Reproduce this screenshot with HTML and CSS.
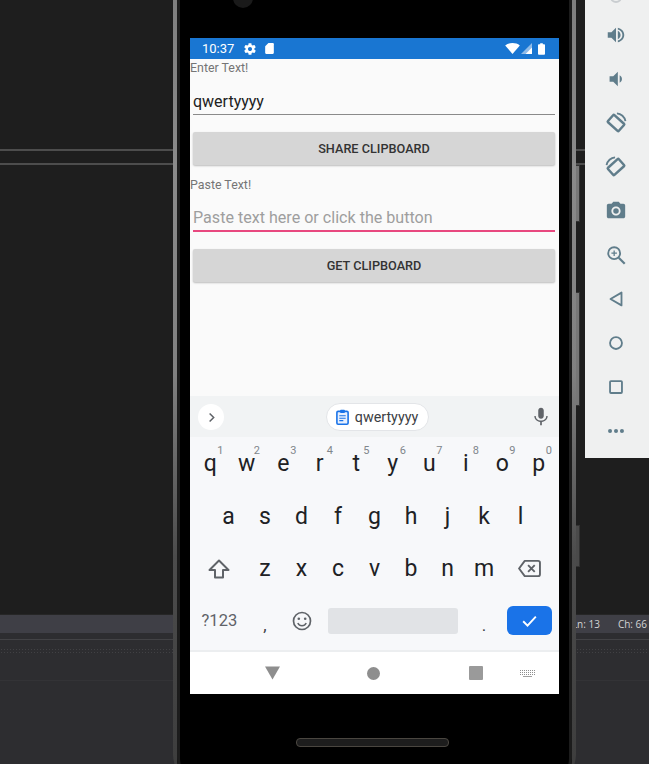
FILE: index.html
```html
<!DOCTYPE html>
<html lang="en">
<head>
  <meta charset="UTF-8" />
  <title>Clipboard sample in emulator</title>
  <link rel="stylesheet" href="styles.css">
</head>
<body>
  <!-- IDE behind the emulator -->
  <div class="ide">
    <div class="pane pane-a"></div>
    <div class="pane pane-b"></div>
    <div class="pane pane-c"></div>
    <div class="ide-status">
      <span>Ln: 13</span>
      <span>Ch: 66</span>
    </div>
    <div class="ide-rule"></div>
    <div class="ide-dots"></div>
    <div class="ide-output"></div>
    <div class="ide-output-rest"></div>
  </div>

  <!-- Side buttons of the device -->
  <div class="side-btn side-btn-a"></div>
  <div class="side-btn side-btn-b"></div>
  <div class="side-btn side-btn-c"></div>

  <div class="phone">
    <div class="phone-body">
      <div class="camera"></div>
      <div class="screen">
        <div class="statusbar">
          <span class="clock">10:37</span>
          <svg class="status-icon gear" viewBox="0 0 24 24"><path d="M19.4 13c.04-.32.07-.66.07-1s-.03-.68-.07-1l2.1-1.65c.2-.15.25-.42.12-.64l-2-3.46c-.12-.22-.39-.3-.61-.22l-2.49 1c-.52-.4-1.08-.73-1.69-.98l-.38-2.65C14.46 2.18 14.25 2 14 2h-4c-.25 0-.46.18-.49.42l-.38 2.65c-.61.25-1.17.59-1.69.98l-2.49-1c-.23-.09-.49 0-.61.22l-2 3.46c-.13.22-.07.49.12.64L4.57 11c-.04.32-.07.66-.07 1s.03.68.07 1l-2.11 1.65c-.19.15-.24.42-.12.64l2 3.46c.12.22.39.3.61.22l2.49-1c.52.4 1.08.73 1.69.98l.38 2.65c.03.24.24.42.49.42h4c.25 0 .46-.18.49-.42l.38-2.65c.61-.25 1.17-.59 1.69-.98l2.49 1c.23.09.49 0 .61-.22l2-3.46c.12-.22.07-.49-.12-.64L19.4 13zM12 15.5c-1.93 0-3.5-1.57-3.5-3.5s1.57-3.5 3.5-3.5 3.5 1.57 3.5 3.5-1.57 3.5-3.5 3.5z"/></svg>
          <svg class="status-icon sd" viewBox="0 0 24 24"><path d="M18 2h-8L4 8v12c0 1.1.9 2 2 2h12c1.1 0 2-.9 2-2V4c0-1.1-.9-2-2-2z"/></svg>
          <span class="status-gap"></span>
          <svg class="wifi" viewBox="0 0 16 12"><path d="M0 2.6C2.2.9 5 0 8 0s5.800.9 8 2.600L8 12z"/></svg>
          <svg class="signal" viewBox="0 0 12 12"><path d="M12 0v12H0z" fill="#8fbbe8"/><path d="M12 5v7H5z" fill="#ffffff"/></svg>
          <svg class="battery" viewBox="0 0 8 13"><path d="M2.500 0h3v1H7a1 1 0 0 1 1 1v10a1 1 0 0 1-1 1H1a1 1 0 0 1-1-1V2a1 1 0 0 1 1-1h1.500z"/></svg>
        </div>

        <div class="app">
          <div class="field-label">Enter Text!</div>
          <div class="entry">qwertyyyy</div>
          <div class="app-btn">SHARE CLIPBOARD</div>
          <div class="field-label next">Paste Text!</div>
          <div class="entry entry-focus">Paste text here or click the button</div>
          <div class="app-btn">GET CLIPBOARD</div>
        </div>

        <div class="keyboard">
          <div class="suggest">
            <div class="chevron-btn">
              <svg viewBox="0 0 24 24"><path d="M9 5.500l6.500 6.500L9 18.500" fill="none" stroke="#5f6368" stroke-width="2.400"/></svg>
            </div>
            <div class="clip-chip">
              <svg viewBox="0 0 16 20"><rect x="1" y="3" width="14" height="16" rx="1.500" fill="#e8f0fe" stroke="#1a73e8" stroke-width="2"/><rect x="5" y="1" width="6" height="4" rx="1" fill="#1a73e8"/><path d="M4 8.500h8M4 11.500h8M4 14.500h5" stroke="#1a73e8" stroke-width="1.400"/></svg>
              <span>qwertyyyy</span>
            </div>
            <svg class="mic" viewBox="0 0 24 24"><path d="M12 14c1.900 0 3.300-1.500 3.300-3.300V4.300C15.300 2.500 13.900 1 12 1S8.700 2.500 8.700 4.300v6.400c0 1.800 1.400 3.300 3.300 3.300zm6.300-3.300c0 3.400-2.800 5.500-6.300 5.500s-6.300-2.100-6.300-5.500H4c0 3.900 3.100 6.700 7 7.200V22h2v-4.100c3.900-.5 7-3.300 7-7.200h-1.700z" fill="#5f6368"/></svg>
          </div>

          <div class="key-row row-top">
            <div class="key">q<sup>1</sup></div>
            <div class="key">w<sup>2</sup></div>
            <div class="key">e<sup>3</sup></div>
            <div class="key">r<sup>4</sup></div>
            <div class="key">t<sup>5</sup></div>
            <div class="key">y<sup>6</sup></div>
            <div class="key">u<sup>7</sup></div>
            <div class="key">i<sup>8</sup></div>
            <div class="key">o<sup>9</sup></div>
            <div class="key">p<sup>0</sup></div>
          </div>
          <div class="key-row row-home">
            <div class="key">a</div>
            <div class="key">s</div>
            <div class="key">d</div>
            <div class="key">f</div>
            <div class="key">g</div>
            <div class="key">h</div>
            <div class="key">j</div>
            <div class="key">k</div>
            <div class="key">l</div>
          </div>
          <div class="key-row row-low">
            <div class="key">
              <svg class="key-icon" viewBox="0 0 24 24"><path d="M12 3.500L2.500 13H8v7.500h8V13h5.500z" fill="none" stroke="#5f6368" stroke-width="2" stroke-linejoin="round"/></svg>
            </div>
            <div class="key">z</div>
            <div class="key">x</div>
            <div class="key">c</div>
            <div class="key">v</div>
            <div class="key">b</div>
            <div class="key">n</div>
            <div class="key">m</div>
            <div class="key">
              <svg class="key-icon backspace" viewBox="0 0 24 20"><path d="M7 2h14a2 2 0 0 1 2 2v12a2 2 0 0 1-2 2H7l-6-8z" fill="none" stroke="#5f6368" stroke-width="2" stroke-linejoin="round"/><path d="M10.500 6.500l7 7M17.500 6.500l-7 7" stroke="#5f6368" stroke-width="2"/></svg>
            </div>
          </div>
          <div class="key-row row-bottom">
            <div class="key key-symbols">?123</div>
            <div class="key key-punct">,</div>
            <div class="key">
              <svg class="key-icon smile" viewBox="0 0 20 20"><circle cx="10" cy="10" r="8.500" fill="none" stroke="#5f6368" stroke-width="1.700"/><circle cx="6.800" cy="7.800" r="1.300" fill="#5f6368"/><circle cx="13.200" cy="7.800" r="1.300" fill="#5f6368"/><path d="M5.800 12c.9 1.900 2.400 2.800 4.200 2.800s3.300-.9 4.200-2.800" fill="none" stroke="#5f6368" stroke-width="1.500"/></svg>
            </div>
            <div class="key key-space"><div class="spacebar"></div></div>
            <div class="key key-punct">.</div>
            <div class="key key-enter">
              <div class="enter-btn">
                <svg viewBox="0 0 24 24"><path d="M4 13l5.500 5.500L20 7" fill="none" stroke="#ffffff" stroke-width="2.400"/></svg>
              </div>
            </div>
          </div>
        </div>

        <div class="navbar">
          <svg class="nav-back" viewBox="0 0 16 14"><path d="M0 0h16L8 14z"/></svg>
          <div class="nav-home"></div>
          <div class="nav-recent"></div>
          <div class="nav-kbd">
            <span></span><span></span><span></span><span class="nav-kbd-bar"></span>
          </div>
        </div>
      </div>
      <div class="speaker"></div>
    </div>
  </div>

  <!-- Emulator toolbar -->
  <div class="toolbar">
    <div class="tool-peek"></div>
    <svg class="tool solid" viewBox="0 0 24 24"><path d="M3 9v6h4l5 5V4L7 9H3zm11-1.700v9.400c1.700-.8 3-2.600 3-4.700s-1.300-3.900-3-4.700z"/><path d="M14 4v2c2.900.9 5 3 5 6s-2.100 5.100-5 6v2c4-.9 7-4 7-8s-3-7.100-7-8z"/></svg>
    <svg class="tool solid" viewBox="0 0 24 24"><path d="M18.500 12c0-1.770-1.020-3.290-2.500-4.030v8.050c1.480-.73 2.500-2.250 2.500-4.020zM5 9v6h4l5 5V4L9 9H5z"/></svg>
    <svg class="tool" viewBox="0 0 24 24" fill="none" stroke="#607d8b"><rect x="4" y="6.800" width="16" height="10.400" rx="1" stroke-width="2.700" transform="rotate(42 12 12)"/><path d="M13 1.500c4.500.3 8.500 3.800 9.300 8.500" stroke-width="2"/></svg>
    <svg class="tool" viewBox="0 0 24 24" fill="none" stroke="#607d8b"><rect x="4" y="6.800" width="16" height="10.400" rx="1" stroke-width="2.700" transform="rotate(-42 12 12)"/><path d="M11 1.500C6.500 1.800 2.500 5.300 1.700 10" stroke-width="2"/></svg>
    <svg class="tool solid" viewBox="0 0 24 24"><path fill-rule="evenodd" d="M9 2L7.170 4H4c-1.100 0-2 .9-2 2v12c0 1.100.9 2 2 2h16c1.100 0 2-.9 2-2V6c0-1.100-.9-2-2-2h-3.170L15 2H9zm3 15c-2.760 0-5-2.240-5-5s2.240-5 5-5 5 2.240 5 5-2.240 5-5 5z"/><circle cx="12" cy="12" r="3"/></svg>
    <svg class="tool" viewBox="0 0 24 24" fill="none" stroke="#607d8b" stroke-width="2"><circle cx="10" cy="10" r="6.500"/><path d="M15 15l6.500 6.500" stroke-width="2.400"/><path d="M10 7v6M7 10h6" stroke-width="1.400"/></svg>
    <svg class="tool" viewBox="0 0 24 24" fill="none" stroke="#607d8b" stroke-width="2"><path d="M18 5v14L6 12z" stroke-linejoin="round"/></svg>
    <svg class="tool" viewBox="0 0 24 24" fill="none" stroke="#607d8b" stroke-width="2"><circle cx="12" cy="12" r="6.500"/></svg>
    <svg class="tool" viewBox="0 0 24 24" fill="none" stroke="#607d8b" stroke-width="2"><rect x="5.500" y="5.500" width="13" height="13" rx="1"/></svg>
    <svg class="tool solid" viewBox="0 0 24 24"><circle cx="5.500" cy="12" r="2.200"/><circle cx="12" cy="12" r="2.200"/><circle cx="18.500" cy="12" r="2.200"/></svg>
  </div>
</body>
</html>
```

FILE: styles.css
```css
html, body {
  margin: 0;
  padding: 0;
  background: #1e1e1e;
  font-family: Roboto, sans-serif;
  overflow: hidden;
}

body {
  position: relative;
  width: 649px;
  height: 764px;
}

/* IDE behind the emulator */
.ide {
  display: flex;
  flex-direction: column;
  height: 764px;
}
.pane {
  background: #1e1e1e;
}
.pane-a {
  height: 149px;
  border-bottom: 2px solid #4d4d4d;
}
.pane-b {
  height: 12px;
  border-bottom: 2px solid #4d4d4d;
}
.pane-c {
  height: 449px;
  border-bottom: 1px solid #262626;
}
.ide-status {
  height: 18px;
  background: #3f3f46;
  display: flex;
  justify-content: flex-end;
  align-items: center;
  gap: 18px;
  padding-right: 2px;
  font-family: "Open Sans", sans-serif;
  font-size: 10px;
  color: #d4d4d4;
}
.ide-rule {
  height: 6px;
  background: #2d2d30;
  border-bottom: 1px solid #434346;
}
.ide-dots {
  height: 7px;
  border-top: 8px solid #2d2d30;
  background-color: #2d2d30;
  background-image: radial-gradient(#414144 40%, transparent 45%);
  background-size: 3px 3px;
}
.ide-output {
  height: 25px;
  background: #2d2d30;
  border-bottom: 1px solid #333336;
}
.ide-output-rest {
  flex: 1;
  background: #2d2d30;
}

/* Device */
.phone {
  position: absolute;
  top: -40px;
  left: 173px;
  width: 403px;
  height: 828px;
  box-sizing: border-box;
  padding: 0 4px;
  border-radius: 34px;
  background: linear-gradient(#7c7c7c, #8a8a8a 25%, #808080 50%, #4c4c4c 72%, #3c3c3c);
}
.phone-body {
  position: relative;
  height: 100%;
  box-sizing: border-box;
  padding: 78px 11px 0 13px;
  border-radius: 30px;
  background: #000;
  box-shadow: inset 3px 0 0 #1c1c1c, inset -3px 0 0 #1c1c1c;
}
.camera {
  position: absolute;
  top: 28px;
  left: 56px;
  width: 20px;
  height: 20px;
  border-radius: 50%;
  background: #1a1a1a;
}
.speaker {
  position: absolute;
  top: 778px;
  left: 119px;
  width: 151px;
  height: 7px;
  border: 1px solid #4a4640;
  border-radius: 4px;
  background: #1d1d1d;
}
.side-btn {
  position: absolute;
  left: 575px;
  width: 3px;
  background: #777;
  border: 1px solid #333;
}
.side-btn-a {
  top: 165px;
  height: 55px;
}
.side-btn-b {
  top: 292px;
  height: 112px;
}
.side-btn-c {
  top: 525px;
  height: 40px;
  background: #4a4a4a;
}

.screen {
  width: 369px;
  height: 656px;
  display: flex;
  flex-direction: column;
  background: #fafafa;
}

.statusbar {
  height: 21px;
  flex: none;
  display: flex;
  align-items: center;
  padding: 0 14px 0 12px;
  background: #1976d2;
  color: #fff;
}
.clock {
  font-size: 13px;
  font-weight: 400;
  margin-right: 9px;
}
.status-icon {
  width: 14px;
  height: 14px;
  fill: #fff;
}
.sd {
  width: 13px;
  height: 13px;
  margin-left: 6px;
}
.status-gap {
  flex: 1;
}
.wifi {
  width: 15px;
  height: 11px;
  fill: #fff;
}
.signal {
  width: 11px;
  height: 11px;
  margin-left: 1px;
}
.battery {
  width: 7px;
  height: 12px;
  margin-left: 6px;
  fill: #fff;
}

/* App */
.app {
  height: 337px;
  flex: none;
  overflow: hidden;
}
.field-label {
  height: 18px;
  line-height: 18px;
  font-size: 12.4px;
  color: #757575;
}
.field-label.next {
  margin-top: 11px;
}
.entry {
  height: 38px;
  box-sizing: border-box;
  margin: 0 4px 0 3px;
  padding-top: 14px;
  line-height: 22px;
  font-size: 16px;
  color: #212121;
  border-bottom: 1px solid #8a8a8a;
}
.entry-focus {
  color: #9e9e9e;
  font-size: 16.1px;
  border-bottom: 2px solid #e8487f;
  padding-top: 13px;
}
.app-btn {
  height: 33px;
  margin: 17px 4px 0 3px;
  display: flex;
  align-items: center;
  justify-content: center;
  background: #d6d6d6;
  border-radius: 2px;
  box-shadow: 0 1px 2px rgba(0, 0, 0, 0.25);
  font-size: 12.7px;
  font-weight: 500;
  color: #333;
}

/* Keyboard */
.keyboard {
  flex: none;
  background: #f7f8fa;
  border-bottom: 2px solid #eceef0;
}
.suggest {
  height: 41px;
  position: relative;
  display: flex;
  align-items: center;
  justify-content: center;
  background: #f1f3f4;
}
.chevron-btn {
  position: absolute;
  left: 8px;
  top: 8px;
  width: 26px;
  height: 26px;
  display: flex;
  align-items: center;
  justify-content: center;
  border-radius: 50%;
  background: #fff;
}
.chevron-btn svg {
  width: 15px;
  height: 15px;
}
.clip-chip {
  display: flex;
  align-items: center;
  gap: 6px;
  height: 28px;
  box-sizing: border-box;
  margin-left: 6px;
  padding: 0 10px 0 9px;
  border: 1px solid #e3e5e8;
  border-radius: 14px;
  background: #fff;
  font-size: 14.3px;
  color: #3c4043;
}
.clip-chip svg {
  width: 13px;
  height: 16px;
}
.mic {
  position: absolute;
  right: 8px;
  top: 11px;
  width: 20px;
  height: 20px;
}

.key-row {
  display: grid;
  grid-template-columns: repeat(10, 1fr);
  padding: 0 2px;
  height: 53px;
}
.row-top {
  height: 54px;
}
.row-home {
  padding: 0 20.25px;
  grid-template-columns: repeat(9, 1fr);
  height: 52px;
}
.row-low {
  grid-template-columns: 1.5fr repeat(7, 1fr) 1.5fr;
}
.row-bottom {
  grid-template-columns: 1.5fr 1fr 1fr 4fr 1fr 1.5fr;
  box-sizing: border-box;
  height: 54px;
  padding-bottom: 3px;
}
.key {
  position: relative;
  display: flex;
  align-items: center;
  justify-content: center;
  box-sizing: border-box;
  padding-bottom: 2px;
  font-size: 23px;
  color: #202124;
}
.key sup {
  position: absolute;
  top: 7px;
  right: 5px;
  font-size: 11px;
  line-height: 13px;
  color: #80868b;
  vertical-align: baseline;
}
.key-icon {
  width: 24px;
  height: 24px;
}
.backspace {
  width: 23px;
  height: 19px;
}
.smile {
  width: 20px;
  height: 20px;
}
.key-symbols {
  font-size: 16.5px;
  color: #5f6368;
}
.key-punct {
  font-size: 17px;
  color: #3c4043;
  padding-top: 9px;
}
.key-space {
  padding: 0 8px 2px;
}
.spacebar {
  width: 100%;
  height: 26px;
  border-radius: 3px;
  background: #e1e3e6;
}
.enter-btn {
  width: 45px;
  height: 29px;
  display: flex;
  align-items: center;
  justify-content: center;
  border-radius: 6px;
  background: #1a73e8;
}
.enter-btn svg {
  width: 19px;
  height: 19px;
}

/* Android nav bar */
.navbar {
  flex: 1;
  display: flex;
  align-items: center;
  background: #fff;
  padding-left: 75px;
}
.nav-back {
  width: 15px;
  height: 14px;
  fill: #8e8e8e;
}
.nav-home {
  width: 13px;
  height: 13px;
  margin-left: 87px;
  border-radius: 50%;
  background: #8e8e8e;
}
.nav-recent {
  width: 14px;
  height: 14px;
  margin-left: 89px;
  border-radius: 1px;
  background: #9a9a9a;
}
.nav-kbd {
  width: 15px;
  margin-left: 37px;
  display: flex;
  flex-wrap: wrap;
  gap: 1px;
}
.nav-kbd span {
  width: 100%;
  height: 1px;
  background: repeating-linear-gradient(90deg, #8e8e8e 0 1px, transparent 1px 2px);
}
.nav-kbd .nav-kbd-bar {
  margin: 0 3px;
  background: #a0a0a0;
}

/* Emulator toolbar */
.toolbar {
  position: absolute;
  top: 0;
  left: 585px;
  width: 64px;
  height: 458px;
  display: flex;
  flex-direction: column;
  align-items: center;
  background: #eff0f0;
  padding: 24px 2px 0 0;
  box-sizing: border-box;
  gap: 22px;
}
.tool-peek {
  position: absolute;
  top: -9px;
  left: 25px;
  width: 12px;
  height: 12px;
  box-sizing: border-box;
  border: 2px solid #c9cdd0;
  border-radius: 50%;
}
.tool {
  width: 22px;
  height: 22px;
  flex: none;
}
.tool.solid {
  fill: #607d8b;
}
```
